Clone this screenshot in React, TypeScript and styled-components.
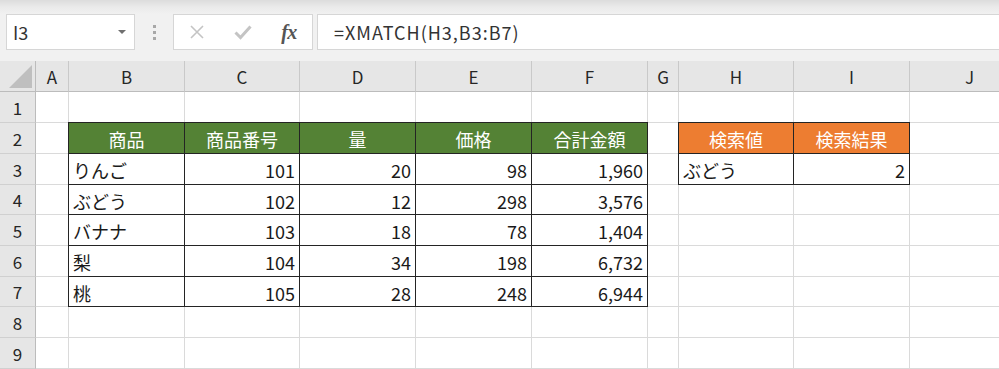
import React from 'react'
import styled, { createGlobalStyle } from 'styled-components'

const GlobalStyle = createGlobalStyle`
  html, body {
    margin: 0;
    padding: 0;
    background: #fff;
    overflow: hidden;
  }
  body {
    font-family: 'Noto Sans CJK JP', 'Noto Sans', sans-serif;
  }
`

type Kind = 'plain' | 'box' | 'green' | 'orange'

interface CellData {
  text?: string
  kind?: Kind
  align?: 'left' | 'right' | 'center'
}

const COLS = ['A', 'B', 'C', 'D', 'E', 'F', 'G', 'H', 'I', 'J']
const WIDTHS = [33, 116, 115, 116, 116, 116, 31, 115, 116, 120]
const ROW_HEIGHTS = [31, 31, 31, 30, 31, 31, 30, 31, 31]

// cell helpers
const g = (text: string): CellData => ({ text, kind: 'green', align: 'center' })
const o = (text: string): CellData => ({ text, kind: 'orange', align: 'center' })
const l = (text: string): CellData => ({ text, kind: 'box', align: 'left' })
const r = (text: string): CellData => ({ text, kind: 'box', align: 'right' })
const e: CellData = {}

const ROWS: CellData[][] = [
  [e, e, e, e, e, e, e, e, e, e],
  [e, g('商品'), g('商品番号'), g('量'), g('価格'), g('合計金額'), e, o('検索値'), o('検索結果'), e],
  [e, l('りんご'), r('101'), r('20'), r('98'), r('1,960'), e, l('ぶどう'), r('2'), e],
  [e, l('ぶどう'), r('102'), r('12'), r('298'), r('3,576'), e, e, e, e],
  [e, l('バナナ'), r('103'), r('18'), r('78'), r('1,404'), e, e, e, e],
  [e, l('梨'), r('104'), r('34'), r('198'), r('6,732'), e, e, e, e],
  [e, l('桃'), r('105'), r('28'), r('248'), r('6,944'), e, e, e, e],
  [e, e, e, e, e, e, e, e, e, e],
  [e, e, e, e, e, e, e, e, e, e],
]

const Window = styled.div`
  width: 999px;
  height: 369px;
  overflow: hidden;
  display: flex;
  flex-direction: column;
  background: #fff;
`

const Toolbar = styled.div`
  height: 61px;
  flex: none;
  display: flex;
  align-items: flex-start;
  padding-top: 14px;
  box-sizing: border-box;
  background: linear-gradient(#dcdcdc 0, #eaeaea 7px, #f1f1f1 14px, #f1f1f1 100%);
`

const NameBox = styled.div`
  margin-left: 6px;
  width: 129px;
  height: 36px;
  box-sizing: border-box;
  border: 1px solid #d6d6d6;
  background: #fff;
  display: flex;
  align-items: center;
  justify-content: space-between;
  padding: 0 8px 0 6px;
  font-size: 18px;
  color: #333;
`

const DropArrow = styled.span`
  width: 0;
  height: 0;
  border-left: 4px solid transparent;
  border-right: 4px solid transparent;
  border-top: 4px solid #6f6f6f;
`

const Splitter = styled.div`
  width: 38px;
  height: 36px;
  display: flex;
  flex-direction: column;
  align-items: center;
  justify-content: center;
  gap: 3px;
`

const Dot = styled.span`
  width: 3px;
  height: 3px;
  background: #a8a8a8;
`

const ButtonBox = styled.div`
  width: 140px;
  height: 36px;
  box-sizing: border-box;
  border: 1px solid #d6d6d6;
  background: #fff;
  display: grid;
  grid-template-columns: 46px 46px 46px;
  align-items: center;
  justify-items: center;
`

const Fx = styled.span`
  font-family: 'Liberation Serif', 'DejaVu Serif', serif;
  font-style: italic;
  font-weight: 700;
  font-size: 20px;
  color: #555;
  letter-spacing: -0.5px;
`

const FormulaBox = styled.div`
  flex: 1;
  margin-left: 4px;
  height: 36px;
  box-sizing: border-box;
  border: 1px solid #d6d6d6;
  border-right: none;
  background: #fff;
  display: flex;
  align-items: center;
  padding-left: 16px;
  font-size: 18px;
  letter-spacing: 1px;
  color: #333;
`

const Sheet = styled.div`
  display: grid;
  grid-template-columns: 36px ${WIDTHS.map((w) => `${w}px`).join(' ')};
  grid-template-rows: 31px ${ROW_HEIGHTS.map((h) => `${h}px`).join(' ')};
`

const Corner = styled.div`
  background: #e6e6e6;
  border-right: 1px solid #bcbcbc;
  border-bottom: 1px solid #bcbcbc;
  display: flex;
  align-items: flex-end;
  justify-content: flex-end;
  padding: 0 3px 3px 0;
`

const ColHeader = styled.div`
  background: #e6e6e6;
  border-right: 1px solid #c9c9c9;
  border-bottom: 1px solid #bcbcbc;
  display: flex;
  align-items: center;
  justify-content: center;
  font-size: 17px;
  color: #262626;
  padding-top: 1px;
`

const RowHeader = styled.div`
  background: #e6e6e6;
  border-right: 1px solid #bcbcbc;
  border-bottom: 1px solid #d0d0d0;
  display: flex;
  align-items: center;
  justify-content: center;
  font-size: 17px;
  color: #262626;
`

const FILLS: Record<Kind, string> = {
  plain: '#fff',
  box: '#fff',
  green: '#548235',
  orange: '#ed7d31',
}

const Cell = styled.div<{ $kind: Kind; $align: 'left' | 'right' | 'center' }>`
  box-sizing: border-box;
  background: ${(p) => FILLS[p.$kind]};
  border-right: 1px solid #dadada;
  border-bottom: 1px solid #dadada;
  ${(p) =>
    p.$kind !== 'plain' &&
    `
    border: 1px solid #242424;
    margin: -1px 0 0 -1px;
  `}
  display: flex;
  align-items: center;
  justify-content: ${(p) =>
    p.$align === 'left' ? 'flex-start' : p.$align === 'right' ? 'flex-end' : 'center'};
  padding: 2px 4px 0 4px;
  font-size: 18px;
  white-space: nowrap;
  color: ${(p) => (p.$kind === 'green' || p.$kind === 'orange' ? '#fff' : '#1a1a1a')};
`

const CancelIcon = () => (
  <svg width="16" height="16" viewBox="0 0 16 16">
    <path d="M2 2 L14 14 M14 2 L2 14" stroke="#c4c4c4" strokeWidth="1.6" fill="none" />
  </svg>
)

const CheckIcon = () => (
  <svg width="18" height="16" viewBox="0 0 18 16">
    <path d="M1.5 8.5 L6.5 13.5 L16.5 2.5" stroke="#c4c4c4" strokeWidth="3" fill="none" />
  </svg>
)

const SelectAll = () => (
  <svg width="23" height="23" viewBox="0 0 23 23">
    <polygon points="23,0 23,23 0,23" fill="#bfbfbf" />
  </svg>
)

const App: React.FC = () => {
  return (
    <Window>
      <GlobalStyle />
      <Toolbar>
        <NameBox>
          <span>I3</span>
          <DropArrow />
        </NameBox>
        <Splitter>
          <Dot />
          <Dot />
          <Dot />
        </Splitter>
        <ButtonBox>
          <CancelIcon />
          <CheckIcon />
          <Fx>fx</Fx>
        </ButtonBox>
        <FormulaBox>=XMATCH(H3,B3:B7)</FormulaBox>
      </Toolbar>
      <Sheet>
        <Corner>
          <SelectAll />
        </Corner>
        {COLS.map((c) => (
          <ColHeader key={c}>{c}</ColHeader>
        ))}
        {ROWS.map((row, ri) => (
          <React.Fragment key={ri}>
            <RowHeader>{ri + 1}</RowHeader>
            {row.map((cell, ci) => (
              <Cell key={ci} $kind={cell.kind ?? 'plain'} $align={cell.align ?? 'left'}>
                {cell.text}
              </Cell>
            ))}
          </React.Fragment>
        ))}
      </Sheet>
    </Window>
  )
}

export default App
